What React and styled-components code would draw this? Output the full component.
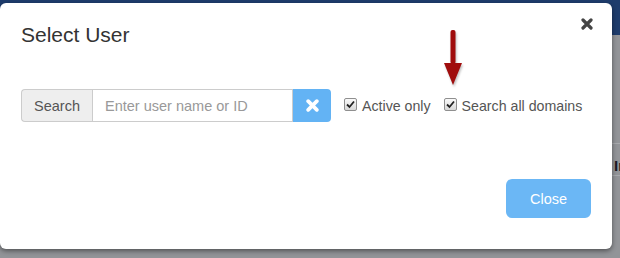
import React from 'react';
import styled, { createGlobalStyle } from 'styled-components';

const GlobalStyle = createGlobalStyle`
  html, body {
    margin: 0;
    padding: 0;
  }
  body {
    font-family: 'Liberation Sans', Arial, sans-serif;
    background: #929498;
  }
`;

const Page = styled.div`
  position: relative;
  width: 620px;
  height: 258px;
  overflow: hidden;
  background: #929498;
`;

const TopBar = styled.div`
  height: 35px;
  background: #1e3c6c;
`;

// the page table behind the backdrop, only its header edge shows
const TableHead = styled.div`
  margin-top: 108px;
  height: 33px;
  box-sizing: border-box;
  border-top: 1px solid #a7a9ad;
  border-bottom: 1px solid #a7a9ad;
  display: flex;
  align-items: flex-end;
  padding: 0 0 1px 614px;
  font-size: 15px;
  font-weight: bold;
  color: #1c1c24;
  white-space: nowrap;
`;

const Modal = styled.div`
  position: absolute;
  left: 0;
  top: 3px;
  width: 612px;
  height: 246px;
  background: #fff;
  border-radius: 6px;
  box-shadow: 0 2px 5px rgba(0, 0, 0, 0.45);
  display: flex;
  flex-direction: column;
`;

const Header = styled.div`
  display: flex;
  justify-content: space-between;
  align-items: flex-start;
  padding: 15px 19px 0 21px;
`;

const Title = styled.h4`
  margin: 5px 0 0;
  font-size: 21px;
  line-height: 23px;
  font-weight: normal;
  color: #333;
`;

const CloseX = styled.span`
  display: flex;
  width: 12px;
  height: 12px;
  cursor: pointer;
`;

const Body = styled.div`
  padding: 43px 21px 0;
  display: flex;
  align-items: center;
  gap: 13px;
`;

const InputGroup = styled.div`
  display: flex;
  width: 310px;
  height: 33px;
`;

const Addon = styled.span`
  display: flex;
  align-items: center;
  padding: 0 12px;
  width: 71px;
  box-sizing: border-box;
  background: #eee;
  border: 1px solid #ccc;
  border-right: none;
  border-radius: 4px 0 0 4px;
  font-size: 14.5px;
  color: #555;
`;

const Input = styled.input`
  flex: 1;
  min-width: 0;
  box-sizing: border-box;
  height: 33px;
  border: 1px solid #ccc;
  padding: 0 12px;
  font-family: inherit;
  font-size: 14.5px;
  color: #555;
  outline: none;
  &::placeholder {
    color: #999;
  }
`;

const ClearButton = styled.button`
  width: 38px;
  height: 33px;
  border: none;
  border-radius: 0 4px 4px 0;
  background: #63b3f4;
  display: flex;
  align-items: center;
  justify-content: center;
  padding: 0;
`;

const Check = styled.label`
  display: flex;
  align-items: center;
  gap: 5px;
  font-size: 14.2px;
  color: #555;
`;

const Box = styled.span`
  width: 11px;
  height: 11px;
  border: 1px solid #8f8f8f;
  border-radius: 2px;
  background: linear-gradient(#fafafa, #d8d8d8);
  display: flex;
  align-items: center;
  justify-content: center;
  margin-top: -2px;
`;

const Footer = styled.div`
  margin-top: auto;
  padding: 0 21px 31px;
  display: flex;
  justify-content: flex-end;
`;

const CloseButton = styled.button`
  width: 85px;
  height: 39px;
  border: none;
  border-radius: 6px;
  background: #6bb7f5;
  color: #fff;
  font-family: inherit;
  font-size: 14.5px;
`;

const Arrow = styled.svg`
  position: absolute;
  left: 442px;
  top: 28px;
  filter: drop-shadow(1px 2px 1px rgba(0, 0, 0, 0.25));
`;

const Cross = ({ size, color, width }) => (
  <svg width={size} height={size} viewBox="0 0 12 12">
    <path d="M2 2 L10 10 M10 2 L2 10" stroke={color} strokeWidth={width} strokeLinecap="round" />
  </svg>
);

const Tick = () => (
  <svg width="9" height="9" viewBox="0 0 9 9">
    <path d="M1 4.5 L3.5 7 L8 1.5" stroke="#222" strokeWidth="1.8" fill="none" />
  </svg>
);

const App = () => {
  return (
    <Page>
      <GlobalStyle />
      <TopBar />
      <TableHead>In</TableHead>

      <Modal>
        <Header>
          <Title>Select User</Title>
          <CloseX><Cross size={12} color="#444" width={3.2} /></CloseX>
        </Header>
        <Body>
          <InputGroup>
            <Addon>Search</Addon>
            <Input placeholder="Enter user name or ID" />
            <ClearButton><Cross size={13} color="#fff" width={3.4} /></ClearButton>
          </InputGroup>
          <Check><Box><Tick /></Box>Active only</Check>
          <Check><Box><Tick /></Box>Search all domains</Check>
        </Body>
        <Footer>
          <CloseButton>Close</CloseButton>
        </Footer>
      </Modal>

      {/* annotation arrow pointing at the checkbox */}
      <Arrow width="22" height="60" viewBox="0 0 22 60">
        <rect x="8.5" y="2" width="5" height="34" rx="2" fill="#a00d0d" />
        <path d="M2 35 L20 35 L11 57 Z" fill="#a00d0d" />
      </Arrow>
    </Page>
  );
};

export default App;
